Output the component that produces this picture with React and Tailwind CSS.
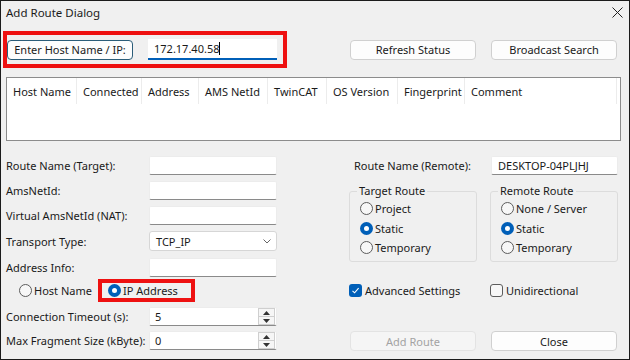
import React from 'react';

const cols = [
  ['Host Name', 70],
  ['Connected', 65],
  ['Address', 57],
  ['AMS NetId', 69],
  ['TwinCAT', 59],
  ['OS Version', 71],
  ['Fingerprint', 67],
  ['Comment', 152],
];

function Radio({ checked, label }) {
  return (
    <div className="flex items-center gap-[2px]">
      {checked ? (
        <span className="w-[13px] h-[13px] rounded-full bg-[#005fb8] flex items-center justify-center">
          <span className="w-[5px] h-[5px] rounded-full bg-white" />
        </span>
      ) : (
        <span className="w-[13px] h-[13px] rounded-full border border-[#5c5c5c] bg-[#f7f7f7]" />
      )}
      <span>{label}</span>
    </div>
  );
}

function Check({ checked, label }) {
  return (
    <div className="flex items-center gap-[3px]">
      {checked ? (
        <span className="w-[13px] h-[13px] rounded-[3px] bg-[#005fb8] flex items-center justify-center">
          <svg width="9" height="9" viewBox="0 0 9 9">
            <path d="M1.5 4.8 L3.6 6.8 L7.6 2.2" fill="none" stroke="white" strokeWidth="1.1" />
          </svg>
        </span>
      ) : (
        <span className="w-[13px] h-[13px] rounded-[3px] border border-[#5c5c5c] bg-[#f7f7f7]" />
      )}
      <span>{label}</span>
    </div>
  );
}

function TextBox({ value, w = 'w-[128px]' }) {
  return (
    <div className={`${w} h-[19px] bg-white border border-[#ececec] border-b-[#8a8a8a] rounded-[2px] flex items-center pl-[6px]`}>
      {value}
    </div>
  );
}

function Spin({ value }) {
  return (
    <div className="w-[128px] h-[19px] bg-white border border-[#ececec] border-b-[#8a8a8a] rounded-[2px] flex items-center">
      <span className="flex-1 pl-[5px]">{value}</span>
      <div className="w-[17px] h-[17px] flex flex-col mr-[1px]">
        <div className="flex-1 border border-[#cfcfcf] bg-[#f6f6f6] flex items-center justify-center">
          <svg width="7" height="4" viewBox="0 0 7 4"><path d="M0 4 L3.5 0 L7 4 Z" fill="#333" /></svg>
        </div>
        <div className="flex-1 border border-t-0 border-[#cfcfcf] bg-[#f6f6f6] flex items-center justify-center">
          <svg width="7" height="4" viewBox="0 0 7 4"><path d="M0 0 L3.5 4 L7 0 Z" fill="#333" /></svg>
        </div>
      </div>
    </div>
  );
}

function Row({ label, children, className = '' }) {
  return (
    <div className={`flex items-center justify-between ${className}`}>
      <span>{label}</span>
      {children}
    </div>
  );
}

function Button({ children, disabled }) {
  return (
    <div
      className={`w-[126px] h-[20px] rounded-[4px] border flex items-center justify-center ${
        disabled ? 'border-[#e3e3e3] bg-[#f5f5f5] text-[#a3a3a3]' : 'border-[#d0d0d0] bg-[#fdfdfd]'
      }`}
    >
      {children}
    </div>
  );
}

export default function App() {
  return (
    <div className="w-[630px] h-[360px] bg-[#f0f0f0] border border-[#1b1b1b] font-['Noto_Sans',sans-serif] text-[11px] leading-none whitespace-nowrap text-[#1a1a1a] flex flex-col overflow-hidden">
      {/* title bar */}
      <div className="h-[23px] flex items-center justify-between pl-[5px] pr-[6px] shrink-0">
        <span className="text-[11.5px]">Add Route Dialog</span>
        <svg width="11" height="11" viewBox="0 0 11 11">
          <path d="M0.5 0.5 L10.5 10.5 M10.5 0.5 L0.5 10.5" stroke="#222" strokeWidth="1" />
        </svg>
      </div>

      {/* host entry row */}
      <div className="flex items-center mt-[7px] shrink-0">
        <div className="ml-[2px] w-[284px] h-[37px] border-4 border-[#ee1111] flex items-center">
          <div className="w-[126px] h-[20px] rounded-[4px] border border-[#2b5d79] bg-[#fdfdfd] flex items-center justify-center">
            Enter Host Name / IP:
          </div>
          <div className="ml-[15px] w-[129px] h-[21px] bg-white border-b-2 border-[#005fb8] flex items-center pl-[6px]">
            172.17.40.58<span className="w-px h-[13px] bg-black" />
          </div>
        </div>
        <div className="ml-[63px]">
          <Button>Refresh Status</Button>
        </div>
        <div className="ml-[15px]">
          <Button>Broadcast Search</Button>
        </div>
      </div>

      {/* route list */}
      <div className="mt-[9px] ml-[5px] w-[615px] h-[64px] shrink-0 bg-white border border-[#8c8c8c]">
        <div className="flex h-[26px]">
          {cols.map(([name, w]) => (
            <div
              key={name}
              style={{ width: w }}
              className="h-full flex items-center pl-[6px] border-r border-[#ececec]"
            >
              {name}
            </div>
          ))}
        </div>
      </div>

      {/* form */}
      <div className="flex">
        {/* left column */}
        <div className="ml-[5px] w-[271px] flex flex-col">
          <Row label="Route Name (Target):" className="mt-[15px]"><TextBox /></Row>
          <Row label="AmsNetId:" className="mt-[6px]"><TextBox /></Row>
          <Row label="Virtual AmsNetId (NAT):" className="mt-[6px]"><TextBox /></Row>
          <Row label="Transport Type:" className="mt-[6px]">
            <div className="w-[128px] h-[20px] bg-white border border-[#d6d6d6] rounded-[3px] flex items-center justify-between pl-[6px] pr-[5px]">
              <span>TCP_IP</span>
              <svg width="8" height="5" viewBox="0 0 8 5">
                <path d="M0.5 0.5 L4 4 L7.5 0.5" fill="none" stroke="#666" strokeWidth="1" />
              </svg>
            </div>
          </Row>
          <Row label="Address Info:" className="mt-[7px]"><TextBox /></Row>
          <div className="mt-[2px] h-[22px] flex items-center">
            <div className="w-[92px] pl-[13px]">
              <Radio label="Host Name" />
            </div>
            <div className="w-[97px] h-[23px] border-4 border-[#ee1111] flex items-center pl-[6px]">
              <Radio checked label="IP Address" />
            </div>
          </div>
          <Row label="Connection Timeout (s):" className="mt-[6px]"><Spin value="5" /></Row>
          <Row label="Max Fragment Size (kByte):" className="mt-[5px]"><Spin value="0" /></Row>
        </div>

        {/* right column */}
        <div className="ml-[72px] w-[269px] flex flex-col">
          <div className="mt-[15px] flex items-center justify-between pl-[5px]">
            <span>Route Name (Remote):</span>
            <TextBox value="DESKTOP-04PLJHJ" w="w-[127px]" />
          </div>
          <div className="mt-[8px] flex gap-[13px]">
            <fieldset className="w-[128px] border border-[#dcdcdc] rounded-[3px] pl-[10px] pb-[4px]">
              <legend className="ml-[-3px] px-[2px] leading-[16px]">Target Route</legend>
              <div className="h-[19px] flex items-center"><Radio label="Project" /></div>
              <div className="h-[20px] flex items-center"><Radio checked label="Static" /></div>
              <div className="h-[19px] flex items-center"><Radio label="Temporary" /></div>
            </fieldset>
            <fieldset className="w-[128px] border border-[#dcdcdc] rounded-[3px] pl-[10px] pb-[4px]">
              <legend className="ml-[-3px] px-[2px] leading-[16px]">Remote Route</legend>
              <div className="h-[19px] flex items-center"><Radio label="None / Server" /></div>
              <div className="h-[20px] flex items-center"><Radio checked label="Static" /></div>
              <div className="h-[19px] flex items-center"><Radio label="Temporary" /></div>
            </fieldset>
          </div>
          <div className="mt-[22px] h-[13px] flex items-center">
            <div className="w-[141px]"><Check checked label="Advanced Settings" /></div>
            <Check label="Unidirectional" />
          </div>
          <div className="mt-[34px] flex items-center">
            <div className="ml-[1px]"><Button disabled>Add Route</Button></div>
            <div className="ml-[15px]"><Button>Close</Button></div>
          </div>
        </div>
      </div>
    </div>
  );
}
